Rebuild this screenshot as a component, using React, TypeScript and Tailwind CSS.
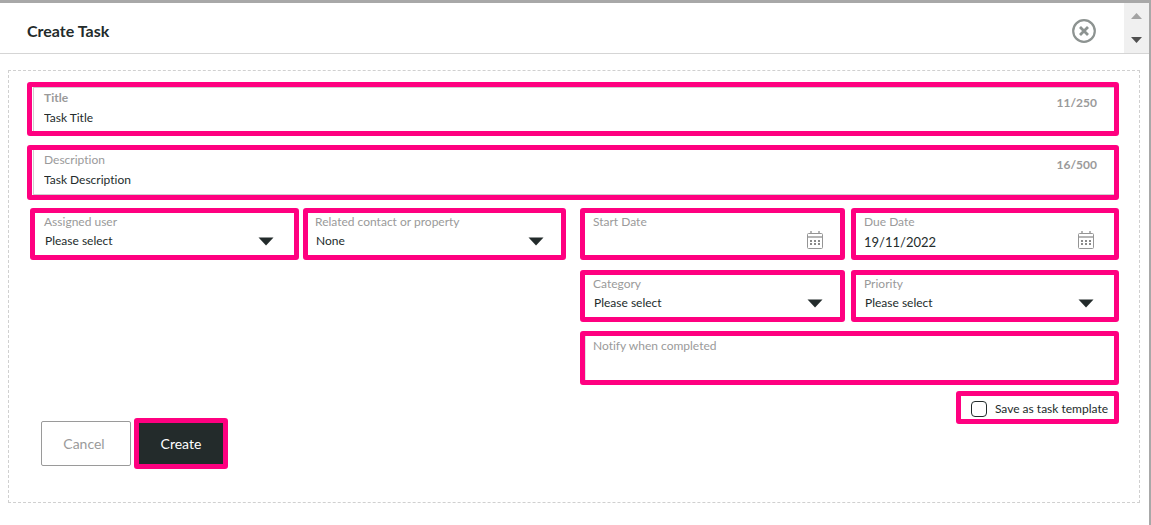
import { useState } from 'react'
import clsx from 'clsx'

const LABEL = 'block text-xs leading-[18px] text-[#9a9a9a]'
const BOX = 'border-5 border-[#ff0080] rounded-[3px]'

function Caret() {
  return (
    <svg className="[grid-area:1/1] justify-self-end self-center pointer-events-none" width="16" height="9" viewBox="0 0 16 9">
      <path d="M0.5 0.5h15L8 8.5z" fill="#232b2b" />
    </svg>
  )
}

function CalendarIcon() {
  return (
    <svg className="block" width="16" height="18" viewBox="0 0 16 18" fill="none">
      <path d="M4 0v3M12 0v3" stroke="#b5b5b5" strokeWidth="2" />
      <rect x="0.5" y="2.5" width="15" height="15" rx="1" stroke="#959595" />
      <path d="M1 6h14" stroke="#b5b5b5" strokeWidth="2" />
      <path d="M3 10h10M3 13h10" stroke="#8a8a8a" strokeWidth="2" strokeDasharray="2 2" />
    </svg>
  )
}

function TextField({ id, label, value, max, count, bold, onChange, className }: {
  id: string
  label: string
  value: string
  max: number
  count: number
  bold?: boolean
  onChange: (v: string) => void
  className: string
}) {
  return (
    <div className={clsx(BOX, 'pl-px', className)}>
      <div className={clsx('flex h-full border-l border-[#cfcfcf] pt-px pl-2.5 pr-[17px]', bold ? 'border-t' : 'border-b')}>
        <div className="flex-1">
          <label htmlFor={id} className={clsx(LABEL, bold && 'font-bold')}>{label}</label>
          <input
            id={id}
            type="text"
            value={value}
            maxLength={max}
            onChange={e => onChange(e.target.value)}
            className="block w-full h-5 text-xs text-[#232b2b] outline-none"
          />
        </div>
        <span className="pt-[5px] text-xs leading-[18px] font-bold text-[#9a9a9a]">{count}/{max}</span>
      </div>
    </div>
  )
}

function SelectField({ id, label, options, className }: {
  id: string
  label: string
  options: string[]
  className?: string
}) {
  return (
    <div className={clsx(BOX, 'h-[52px]', className)}>
      <label htmlFor={id} className={LABEL}>{label}</label>
      <div className="grid">
        <select id={id} className="[grid-area:1/1] appearance-none w-full h-5 pl-px text-xs text-[#232b2b] outline-none">
          {options.map(o => <option key={o}>{o}</option>)}
        </select>
        <Caret />
      </div>
    </div>
  )
}

function DateField({ id, label, initial, className }: {
  id: string
  label: string
  initial: string
  className?: string
}) {
  const [value, setValue] = useState(initial)
  return (
    <div className={clsx(BOX, 'h-[52px]', className)}>
      <label htmlFor={id} className={LABEL}>{label}</label>
      <div className="flex items-start">
        <input
          id={id}
          type="text"
          value={value}
          onChange={e => setValue(e.target.value)}
          className="flex-1 min-w-0 h-[22px] text-[13px] text-[#232b2b] outline-none"
        />
        <button type="button" aria-label={`Pick ${label}`}><CalendarIcon /></button>
      </div>
    </div>
  )
}

export default function App() {
  const [title, setTitle] = useState('Task Title')
  const [description, setDescription] = useState('Task Description')
  const [template, setTemplate] = useState(false)

  return (
    <div className="min-h-screen bg-white border-t-3 border-r-2 border-[#a8a8a8] font-[Lato,sans-serif] [font-variant-ligatures:none]">
      <header className="flex h-[51px] border-b border-[#d5d5d5]">
        <div className="flex flex-1 items-center justify-between pl-[27px] pr-7 pt-1.5">
          <h1 className="text-base font-bold text-[#232b2b]">Create Task</h1>
          <button type="button" aria-label="Close">
            <svg width="24" height="24" viewBox="0 0 24 24" fill="none" stroke="#8d9391">
              <circle cx="12" cy="12" r="10.8" strokeWidth="2.2" />
              <path d="M8 8l8 8M16 8l-8 8" strokeWidth="2.8" />
            </svg>
          </button>
        </div>
        <div className="flex flex-col items-center justify-between w-[25px] py-2.5 bg-[#f0f0f0]">
          <button type="button" aria-label="Scroll up">
            <svg className="block" width="11" height="6" viewBox="0 0 11 6"><path d="M0 6L5.5 0L11 6z" fill="#a3a3a3" /></svg>
          </button>
          <button type="button" aria-label="Scroll down">
            <svg className="block" width="11" height="6" viewBox="0 0 11 6"><path d="M0 0L5.5 6L11 0z" fill="#505050" /></svg>
          </button>
        </div>
      </header>

      <form
        onSubmit={e => e.preventDefault()}
        className="mt-4 ml-2 mr-[9px] pt-[11px] pr-5 pb-[33px] pl-[18px] border border-dashed border-[#d0d0d0]"
      >
        <TextField
          id="title" label="Title" value={title} max={250} count={11} bold
          onChange={setTitle} className="h-[54px]"
        />
        <TextField
          id="description" label="Description" value={description} max={500} count={16}
          onChange={setDescription} className="h-[55px] mt-[9px]"
        />

        <div className="grid grid-cols-2 gap-x-3.5 mt-2">
          <div className="pl-[3px]">
            <div className="grid grid-cols-[269fr_263fr] gap-x-1">
              <SelectField id="user" label="Assigned user" options={['Please select']} className="pl-[9px] pr-5" />
              <SelectField id="related" label="Related contact or property" options={['None']} className="pl-[7px] pr-[17px]" />
            </div>
            <div className="flex items-center gap-[3px] mt-[158px] pl-[11px]">
              <button type="button" className="w-[90px] h-[45px] pr-1 border border-[#9a9a9a] rounded-xs text-sm text-[#9a9a9a]">
                Cancel
              </button>
              <button type="submit" className={clsx(BOX, 'w-[94px] h-[51px] bg-[#232b2b] text-sm text-white')}>
                Create
              </button>
            </div>
          </div>

          <div className="flex flex-col">
            <div className="grid grid-cols-[265fr_268fr] gap-x-1.5 gap-y-2.5">
              <DateField id="start" label="Start Date" initial="" className="pl-2 pr-[17px]" />
              <DateField id="due" label="Due Date" initial="19/11/2022" className="pl-2 pr-5" />
              <SelectField id="category" label="Category" options={['Please select']} className="pl-2 pr-[17px]" />
              <SelectField id="priority" label="Priority" options={['Please select']} className="pl-2 pr-5" />
            </div>
            <div className={clsx(BOX, 'h-[54px] mt-[9px]')}>
              <div className="h-full border-l border-[#e2e2e2] pt-px pl-[7px]">
                <label htmlFor="notify" className={LABEL}>Notify when completed</label>
                <input id="notify" type="text" className="block w-full h-5 text-xs text-[#232b2b] outline-none" />
              </div>
            </div>
            <label className={clsx(BOX, 'flex items-center gap-2 self-end h-[33px] mt-1.5 pt-0.5 pl-2.5 pr-1.5 text-xs text-[#232b2b]')}>
              <input
                type="checkbox"
                checked={template}
                onChange={e => setTemplate(e.target.checked)}
                className="appearance-none size-4 border border-[#232b2b] rounded-sm checked:bg-[#232b2b]"
              />
              Save as task template
            </label>
          </div>
        </div>
      </form>
    </div>
  )
}
